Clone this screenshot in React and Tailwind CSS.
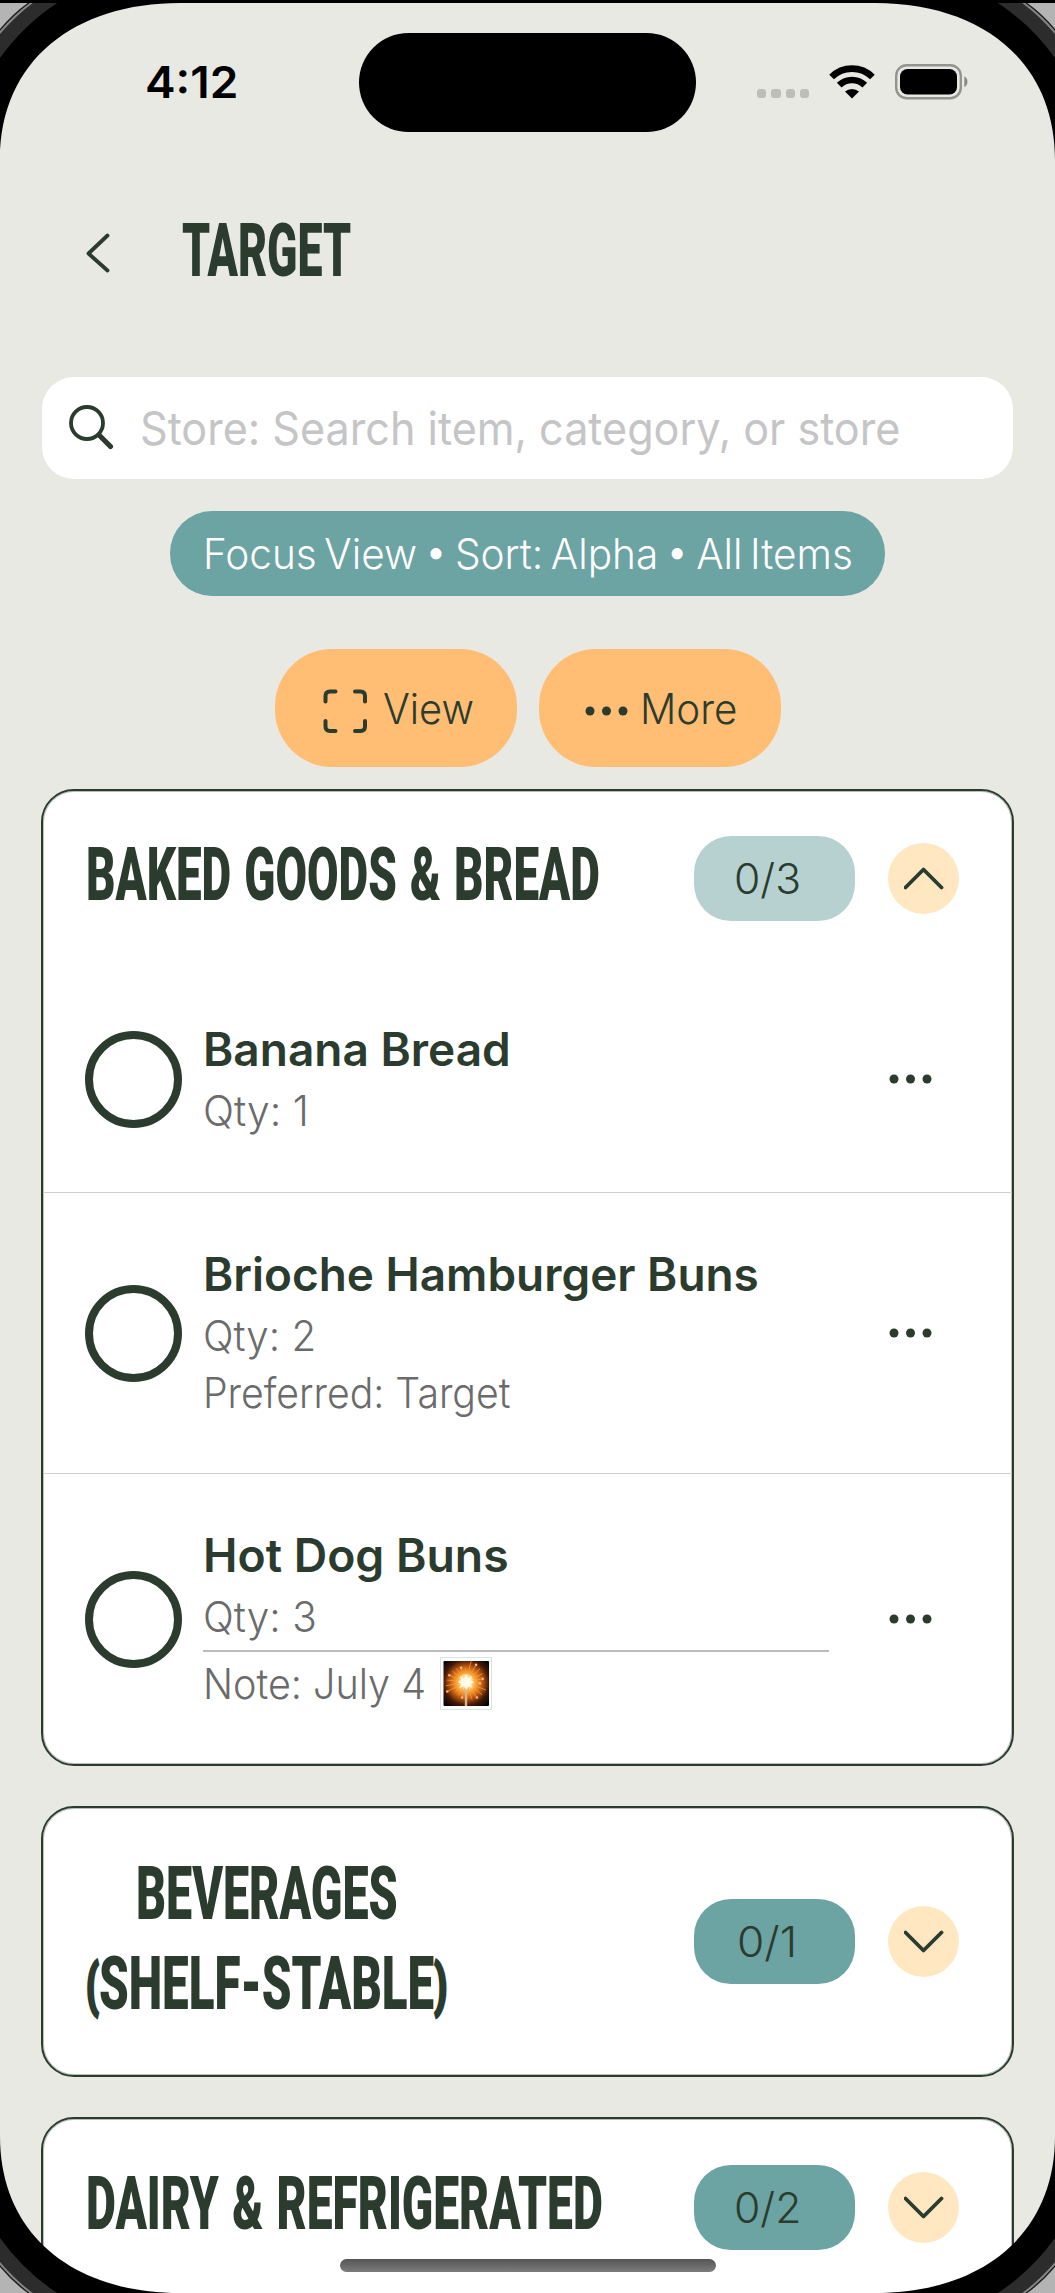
import React, { useLayoutEffect, useRef, useState } from "react";

const INK = "#2b3c2f";

/* Squeezes one line of text to the width of its box. */
function Fit({ box = "", text = "", children }) {
  const outer = useRef(null);
  const inner = useRef(null);
  const [scale, setScale] = useState(1);
  useLayoutEffect(() => {
    setScale(outer.current.clientWidth / inner.current.offsetWidth);
  }, [children]);
  return (
    <span ref={outer} className={`block shrink-0 whitespace-nowrap ${box}`}>
      <span
        ref={inner}
        className={`inline-block origin-left align-top ${text}`}
        style={{ transform: `scaleX(${scale})` }}
      >
        {children}
      </span>
    </span>
  );
}

function Heading({ box, children }) {
  return (
    <Fit
      box={`h-[90px] ${box}`}
      text="font-['Roboto',sans-serif] text-[74px] leading-[84px] font-black tracking-[0px] [word-spacing:3px] text-[#2b3c2f]"
    >
      {children}
    </Fit>
  );
}

function Paren({ children }) {
  return (
    <span className="relative -top-[4px] text-[57px] leading-none [-webkit-text-stroke:3px_#2b3c2f]">{children}</span>
  );
}

function Dots({ className = "" }) {
  return (
    <svg className={`shrink-0 ${className}`} width="43" height="10" viewBox="0 0 43 10" fill={INK}>
      <circle cx="5" cy="5" r="4.5" />
      <circle cx="21.5" cy="5" r="4.5" />
      <circle cx="38" cy="5" r="4.5" />
    </svg>
  );
}

function Toggle({ open }) {
  return (
    <div className="ml-[33px] flex size-[71px] shrink-0 items-center justify-center rounded-full bg-[#ffe7c2]">
      <svg width="40" height="23" viewBox="0 0 40 23" fill="none" stroke={INK} strokeWidth="3.8" strokeLinecap="round" strokeLinejoin="round">
        <path d={open ? "M1.5 20.500 19.500 2.500 37.500 20.500" : "M1.500 2.500 19.500 20.500 37.500 2.500"} />
      </svg>
    </div>
  );
}

function Badge({ color, box, children }) {
  return (
    <div className={`flex h-[85px] w-[161px] shrink-0 items-center rounded-[37px] ${color}`}>
      <Fit box={box} text="text-[42px] leading-[85px] font-light text-[#2b3c2f]">
        {children}
      </Fit>
    </div>
  );
}

function Card({ className = "", children }) {
  return (
    <section
      className={`rounded-[33px] border-2 border-[#2b3c2f] bg-white shadow-[inset_0_0_0_1px_#2b3c2f55] ${className}`}
    >
      {children}
    </section>
  );
}

function Row({ title, titleBox, className = "", children }) {
  return (
    <div className={`flex items-center pl-[42px] ${className}`}>
      <div className="size-[97px] shrink-0 rounded-full border-8 border-[#2b3c2f]" />
      <div className="ml-[21px] w-[626px]">
        <Fit box={`mb-1 h-[58px] ${titleBox}`} text="text-[46px] leading-[59px] font-semibold text-[#2b3c2f]">
          {title}
        </Fit>
        {children}
      </div>
      <Dots className="ml-[60px]" />
    </div>
  );
}

function Detail({ box, children }) {
  return (
    <Fit box={`h-[57px] ${box}`} text="text-[42px] leading-[57px] font-light text-[#6b6b6b]">
      {children}
    </Fit>
  );
}

function Sparkler() {
  const rays = Array.from({ length: 22 }, (_, i) => {
    const a = (i * Math.PI * 2) / 22 + 0.1;
    const r = 14 + ((i * 7) % 8);
    return [26 + Math.cos(a) * r, 25 + Math.sin(a) * r];
  });
  return (
    <svg className="ml-[14px] shrink-0" width="52" height="53" viewBox="0 0 52 53">
      <defs>
        <radialGradient id="spark" cx="0.5" cy="0.48" r="0.66">
          <stop offset="0" stopColor="#fff" />
          <stop offset="0.16" stopColor="#fff6cf" />
          <stop offset="0.3" stopColor="#ffb23c" />
          <stop offset="0.52" stopColor="#c8600f" />
          <stop offset="0.76" stopColor="#42190a" />
          <stop offset="1" stopColor="#070303" />
        </radialGradient>
      </defs>
      <rect x="0.5" y="0.5" width="51" height="52" fill="#fbfdfd" stroke="#dbe4e4" />
      <rect x="3.5" y="4" width="45.5" height="45" rx="1" fill="url(#spark)" />
      <g stroke="#ff9a3d" strokeWidth="0.9" strokeLinecap="round" opacity="0.85">
        {rays.map(([x, y], i) => (
          <line key={i} x1="26" y1="25" x2={x} y2={y} />
        ))}
      </g>
      <path d="M26 25V49" stroke="#d9b48e" strokeWidth="2.4" />
      <g fill="#ffb289">
        {rays.filter((_, i) => i % 3 === 0).map(([x, y], i) => (
          <circle key={i} cx={x} cy={y} r="1.3" />
        ))}
      </g>
      <circle cx="26" cy="24" r="7" fill="#ffe9a8" opacity="0.7" />
      <path d="M26 17l2 4.500 4-2.500-1.500 4.500 4 1.500-4 2 2 4-4.500-2-2 4-2-4-4.500 2 2-4.500-4-1.500 4-1.500-1.500-4.500 4 2.500z" fill="#fffbe6" />
    </svg>
  );
}

function Corner({ className }) {
  return (
    <svg className={`absolute ${className}`} width="180" height="160" viewBox="0 0 180 160">
      <path d="M0 0H180V3C75 3 0 60 0 160Z" fill="#000" />
      <path d="M0 0H62Q26 22 0 58Z" fill="#2c2c2c" />
      <path d="M0 0H37Q17 14 0 34Z" fill="#858585" />
      <path d="M0 0H34Q15 13 0 31Z" fill="#1c1c1c" />
      <path d="M0 0H32Q14 12 0 29Z" fill="#b4b4b4" />
    </svg>
  );
}

function StatusBar() {
  return (
    <div className="flex h-[163px] shrink-0 items-start pt-[30px]">
      <Fit box="ml-[145px] mt-[18px] h-[64px] w-[93px]" text="text-[44px] leading-[63px] font-semibold text-black">
        4:12
      </Fit>
      <div className="ml-[121px] h-[99px] w-[337px] shrink-0 rounded-full bg-black" />
      <div className="mt-[55.5px] ml-[61px] flex gap-[5px]">
        {[0, 1, 2, 3].map((i) => (
          <span key={i} className="size-[9.3px] rounded-[3px] bg-[#bdbeb9]" />
        ))}
      </div>
      <svg className="mt-8 ml-[20px]" width="46" height="34" viewBox="0 0 46 34">
        <g fill="none" stroke="#000" strokeWidth="6.6">
          <path d="M2.600 12A29 29 0 0 1 43.400 12" />
          <path d="M10.200 20.200A18.300 18.300 0 0 1 35.800 20.200" />
        </g>
        <path d="M23 33.500 16 26.600A10.500 10.500 0 0 1 30 26.600Z" fill="#000" />
      </svg>
      <svg className="mt-[31px] ml-[20px]" width="75" height="36" viewBox="0 0 75 36">
        <rect x="1.200" y="1.200" width="64.600" height="33" rx="10.500" fill="none" stroke="#93948f" strokeWidth="2.400" />
        <rect x="5" y="5" width="57" height="25.500" rx="7.500" fill="#000" />
        <path d="M69.300 12.500C73.500 14 73.500 21.500 69.300 23Z" fill="#8a8b86" />
      </svg>
    </div>
  );
}

export default function App() {
  return (
    <main className="relative flex h-[2293px] w-[1055px] flex-col overflow-hidden border-t-[3px] border-black bg-[#e8e9e3] font-['Inter',sans-serif]">
      <StatusBar />

      <header className="flex h-[174px] shrink-0 items-center pl-[86px]">
        <svg width="24" height="40" viewBox="0 0 24 40" fill="none" stroke={INK} strokeWidth="3.800" strokeLinecap="round" strokeLinejoin="round">
          <path d="M21.500 2.500 2.500 20.500 21.500 37.500" />
        </svg>
        <Heading box="ml-[72px] mt-[2px] w-[169px]">TARGET</Heading>
      </header>

      <div className="mx-[42px] mt-[36.500px] flex h-[102.500px] shrink-0 items-center rounded-[32px] bg-white pl-[27px]">
        <svg width="45" height="45" viewBox="0 0 45 45" fill="none" stroke={INK} strokeLinecap="round">
          <circle cx="18" cy="18" r="16" strokeWidth="3.800" />
          <path d="M30 30 41.500 41.500" strokeWidth="5.200" />
        </svg>
        <Fit box="ml-[26px] h-[102px] w-[760px]" text="text-[46px] leading-[102px] font-normal text-[#c5c5c7]">
          Store: Search item, category, or store
        </Fit>
      </div>

      <div className="mt-8 flex h-[85px] w-[715px] shrink-0 items-center justify-center self-center rounded-[42px] bg-[#6ca3a3]">
        <Fit box="h-[85px] w-[650px]" text="text-[42px] leading-[85px] font-light [word-spacing:-4px] text-white">
          Focus View • Sort: Alpha • All Items
        </Fit>
      </div>

      <div className="mt-[53px] flex h-[118px] shrink-0 justify-center gap-[22px]">
        <div className="flex w-[242px] items-center rounded-[57px] bg-[#ffbe74] pl-[48px]">
          <svg className="mt-[6px]" width="45" height="45" viewBox="0 0 45 45" fill="none" stroke={INK} strokeWidth="4" strokeLinecap="round">
            <path d="M2.500 12.500V7Q2.500 2.500 7 2.500H12.500M32 2.500H37.500Q42 2.500 42 7V12.500M42 32V37.500Q42 42 37.500 42H32M12.500 42H7Q2.500 42 2.500 37.500V32" />
          </svg>
          <Fit box="ml-[15px] h-[118px] w-[91px]" text="text-[42px] leading-[119px] font-light text-[#2b3c2f]">
            View
          </Fit>
        </div>
        <div className="flex w-[242px] items-center rounded-[57px] bg-[#ffbe74] pl-[46px]">
          <Dots className="mt-[6px]" />
          <Fit box="ml-[12px] h-[118px] w-[97px]" text="text-[42px] leading-[119px] font-light text-[#2b3c2f]">
            More
          </Fit>
        </div>
      </div>

      <div className="mx-[41px] mt-[22px] flex shrink-0 flex-col gap-[40px]">
        <Card className="h-[977px]">
          <div className="flex h-[174px] items-center pl-[43px]">
            <Heading box="w-[514px]">BAKED GOODS &amp; BREAD</Heading>
            <div className="ml-auto flex items-center pr-[53px]">
              <Badge color="bg-[#b6d1d0]" box="ml-[40px] w-[67px]">0/3</Badge>
              <Toggle open />
            </div>
          </div>
          <Row title="Banana Bread" titleBox="w-[308px]" className="h-[227px] pt-px">
            <Detail box="w-[106px]">Qty: 1</Detail>
          </Row>
          <Row title="Brioche Hamburger Buns" titleBox="w-[556px]" className="h-[281px] border-t border-[#cfcfd1]">
            <Detail box="w-[113px]">Qty: 2</Detail>
            <Detail box="w-[307px]">Preferred: Target</Detail>
          </Row>
          <Row title="Hot Dog Buns" titleBox="w-[306px]" className="h-[291px] border-t border-[#cfcfd1]">
            <Detail box="w-[114px]">Qty: 3</Detail>
            <div className="mt-[5px] mb-[3px] h-[2px] w-[626px] bg-[#bcbcbf]" />
            <div className="flex items-center">
              <Detail box="w-[223px]">Note: July 4</Detail>
              <Sparkler />
            </div>
          </Row>
        </Card>

        <Card className="flex h-[271px] items-center pl-[43px]">
          <div className="flex flex-col items-center">
            <Heading box="w-[262px]">BEVERAGES</Heading>
            <Heading box="w-[361px]">
              <Paren>(</Paren>SHELF-STABLE<Paren>)</Paren>
            </Heading>
          </div>
          <div className="ml-auto flex items-center pr-[53px]">
            <Badge color="bg-[#6ca3a3]" box="ml-[43px] w-[60px]">0/1</Badge>
            <Toggle />
          </div>
        </Card>

        <Card className="flex h-[180px] items-center pl-[43px]">
          <Heading box="w-[517px]">DAIRY &amp; REFRIGERATED</Heading>
          <div className="ml-auto flex items-center pr-[53px]">
            <Badge color="bg-[#6ca3a3]" box="ml-[40px] w-[67px]">0/2</Badge>
            <Toggle />
          </div>
        </Card>
      </div>

      <div className="absolute top-[2256px] left-[340px] h-[13px] w-[376px] rounded-full bg-linear-to-b from-[#555] to-[#7c7c7c]" />
      <Corner className="-top-[3px] left-0" />
      <Corner className="-top-[3px] right-0 -scale-x-100" />
      <Corner className="bottom-[-3px] left-0 -scale-y-100" />
      <Corner className="right-0 bottom-[-3px] -scale-100" />
    </main>
  );
}
